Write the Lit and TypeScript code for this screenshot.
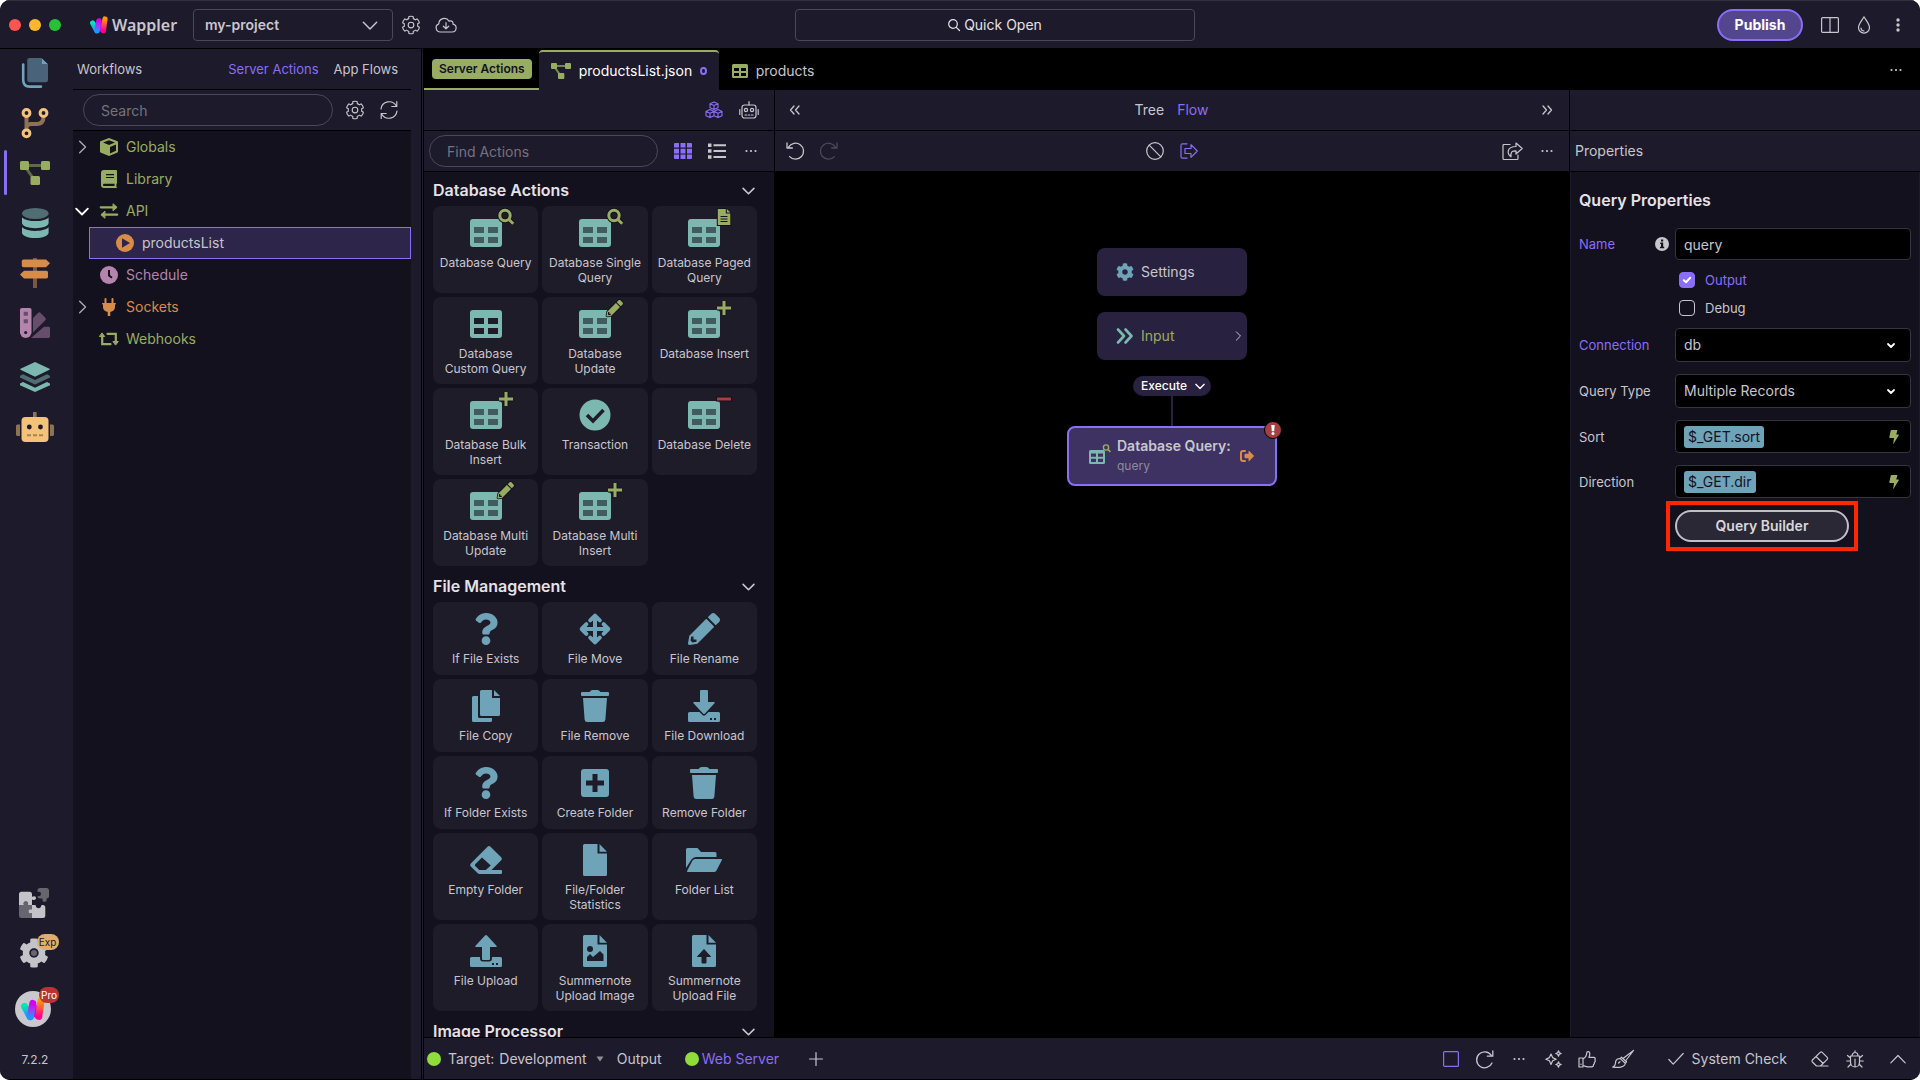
import { LitElement, html, svg, css, nothing } from "lit";
import { customElement, state } from "lit/decorators.js";

/* ---------- icon helpers ---------- */

const solid = (w: number, h: number, body: unknown, vb = `0 0 ${w} ${h}`) =>
  html`<svg class="solid" width=${w} height=${h} viewBox=${vb} aria-hidden="true">${body}</svg>`;
const line = (w: number, h: number, body: unknown, vb = `0 0 ${w} ${h}`) =>
  html`<svg class="line" width=${w} height=${h} viewBox=${vb} aria-hidden="true">${body}</svg>`;

const COG =
  "M487.4 315.7l-42.6-24.6c4.3-23.2 4.3-47 0-70.2l42.6-24.6c4.9-2.8 7.1-8.6 5.5-14-11.1-35.6-30-67.8-54.7-94.6-3.8-4.1-10-5.1-14.8-2.3L380.8 110c-17.9-15.4-38.5-27.3-60.8-35.1V25.8c0-5.6-3.9-10.5-9.4-11.7-36.7-8.2-74.3-7.8-109.2 0-5.5 1.2-9.4 6.1-9.4 11.7V75c-22.2 7.9-42.8 19.8-60.8 35.1L88.7 85.5c-4.9-2.8-11-1.9-14.8 2.3-24.7 26.7-43.6 58.9-54.7 94.6-1.7 5.4.6 11.2 5.5 14L67.3 221c-4.3 23.2-4.3 47 0 70.2l-42.6 24.6c-4.9 2.8-7.1 8.6-5.5 14 11.1 35.6 30 67.8 54.7 94.6 3.8 4.1 10 5.1 14.8 2.3l42.6-24.6c17.9 15.4 38.5 27.3 60.8 35.1v49.2c0 5.6 3.9 10.5 9.4 11.7 36.7 8.2 74.3 7.8 109.2 0 5.5-1.2 9.4-6.1 9.4-11.7v-49.2c22.2-7.9 42.8-19.8 60.8-35.1l42.6 24.6c4.9 2.8 11 1.9 14.8-2.3 24.7-26.7 43.6-58.9 54.7-94.6 1.5-5.5-.7-11.3-5.6-14.1zM256 336c-44.1 0-80-35.9-80-80s35.9-80 80-80 80 35.9 80 80-35.9 80-80 80z";
const QUESTION =
  "M202.021 0C122.202 0 70.503 32.703 29.914 91.026c-7.363 10.58-5.093 25.086 5.178 32.874l43.138 32.709c10.373 7.865 25.132 6.026 33.253-4.148 25.049-31.381 43.63-49.449 82.757-49.449 30.764 0 68.816 19.799 68.816 49.631 0 22.552-18.617 34.134-48.993 51.164-35.423 19.86-82.299 44.576-82.299 106.405V320c0 13.255 10.745 24 24 24h72.471c13.255 0 24-10.745 24-24v-5.773c0-42.86 125.268-44.645 125.268-160.627C377.504 66.256 286.902 0 202.021 0zM192 373.459c-38.196 0-69.271 31.075-69.271 69.271 0 38.195 31.075 69.27 69.271 69.27s69.271-31.075 69.271-69.271-31.075-69.27-69.271-69.27z";
const PENCIL =
  "M497.9 142.1l-46.1 46.1c-4.7 4.7-12.3 4.7-17 0l-111-111c-4.7-4.7-4.7-12.3 0-17l46.1-46.1c18.7-18.7 49.1-18.7 67.9 0l60.1 60.1c18.8 18.7 18.8 49.1 0 67.9zM284.2 99.8L21.6 362.4.4 483.9c-2.9 16.4 11.4 30.6 27.8 27.8l121.5-21.3 262.6-262.6c4.7-4.7 4.7-12.3 0-17l-111-111c-4.8-4.7-12.4-4.7-17.1 0zM88 424h48v36.3l-64.5 11.3-31.1-31.1L51.7 376H88v48z";

const cogOutline = (s = 18) =>
  line(s, s, svg`<path d=${COG} stroke-width="32"/>`, "0 0 512 512");
const chevDown = (w = 12, sw = 1.6) =>
  line(w, w, svg`<path d="M1 4l5 5 5-5" stroke-width=${sw}/>`, "0 0 12 12");
const chevRight = (w = 12) =>
  line(w, w, svg`<path d="M4 1l5 5-5 5" stroke-width="1.2"/>`, "0 0 12 12");
const dots = () =>
  solid(12, 12, svg`<circle cx="1.5" cy="6" r="1.1"/><circle cx="6" cy="6" r="1.1"/><circle cx="10.5" cy="6" r="1.1"/>`);
const refreshOne = () =>
  line(18, 18, svg`<path d="M15.2 5.2A8 8 0 1 0 16 13M16.8 1v5.2h-5.4" stroke-width="1.3"/>`);
const undo = () =>
  line(18, 18, svg`<path d="M2.6 5.2A8 8 0 1 1 3.6 14.6M1 1v5h5.4" stroke-width="1.3"/>`);
const redo = () =>
  line(18, 18, svg`<path d="M15.4 5.2A8 8 0 1 0 14.4 14.6M17 1v5h-5.4" stroke-width="1.3"/>`);
const robotLine = () =>
  line(20, 18, svg`<rect x="3" y="4" width="14" height="13" rx="2.5"/><path d="M10 .5V4M.8 8.5v5M19.2 8.5v5M6 14h1.6M9.2 14h1.6M12.4 14H14"/><circle cx="7" cy="9" r="1.6"/><circle cx="13" cy="9" r="1.6"/>`);
const cubes = () =>
  line(18, 18, svg`<path d="M9 1l4 1.8v4L9 8.6 5 6.8v-4zM5 2.8l4 1.8 4-1.8M9 4.6v4M5 8.6l4 1.8v4.3l-4 1.9-4-1.9v-4.3zM1 10.4l4 1.9 4-1.9M5 12.3v4.3M13 8.6l4 1.8v4.3l-4 1.9-4-1.9v-4.3zM9 10.4l4 1.9 4-1.9M13 12.3v4.3" stroke-width="1.1"/>`);
const eraserLine = () =>
  line(18, 16, svg`<path d="M5.5 15L1.4 11q-.9-1 0-2l7.8-7.6q1-.9 2 0l5 5q.9 1 0 2L9.5 15zM5 5.5l7.2 7M5.5 15H17"/>`);
const workflowGlyph = (w: number, h: number, dim: string) =>
  solid(w, h, svg`<path d="M8 4.5H22M6 7L13 17" fill="none" stroke=${dim} stroke-width="3"/><rect width="9" height="9" rx="1.5"/><rect x="21" width="9" height="9" rx="1.5"/><rect x="10.5" y="15" width="9.5" height="9" rx="1.5"/>`, "0 0 30 24");
const tableGlyph = (w: number, h: number, hole: string) =>
  solid(w, h, svg`<rect width="16" height="14" rx="1.5"/><path d="M2 4h5v3H2zM9 4h5v3H9zM2 9h5v3H2zM9 9h5v3H9z" fill=${hole}/>`, "0 0 16 14");

const logo = (w: number, h: number, id: string) => html`
  <svg width=${w} height=${h} viewBox="0 0 24 24" aria-hidden="true">
    <defs>
      <linearGradient id="${id}a" x1="0" y1="0" x2="0" y2="1"><stop offset="0" stop-color="#00e6b4"/><stop offset="1" stop-color="#2a8cff"/></linearGradient>
      <linearGradient id="${id}b" x1="0" y1="0" x2="0" y2="1"><stop offset="0" stop-color="#d800f0"/><stop offset=".5" stop-color="#a03cf5"/><stop offset="1" stop-color="#1e96ff"/></linearGradient>
      <linearGradient id="${id}c" x1="0" y1="0" x2="0" y2="1"><stop offset="0" stop-color="#ff9a00"/><stop offset="1" stop-color="#ff0090"/></linearGradient>
    </defs>
    <path d="M3.6 9.3L9 19.6" stroke="url(#${id}a)" stroke-width="7" stroke-linecap="round"/>
    <path d="M12 7L15.5 18" stroke="#d800f0" stroke-width="6" stroke-linecap="round"/>
    <path d="M11.8 6.4L9.4 19.6" stroke="url(#${id}b)" stroke-width="7" stroke-linecap="round"/>
    <path d="M20 4L17.8 19.4" stroke="url(#${id}c)" stroke-width="7" stroke-linecap="round"/>
  </svg>`;

/* ---------- rail icons ---------- */

const railIcons: Record<string, unknown> = {
  files: solid(30, 30, svg`<path d="M3.2 6.5V22q0 6.6 6.5 6.6H21" fill="none" stroke="#6fa3b8" stroke-width="2.6" stroke-linecap="round"/><path d="M9.5 0H22v6h6v16q0 2.3-2.3 2.3H9.5Q7.2 24.3 7.2 22V2.3Q7.2 0 9.5 0z" fill="#48637a"/><path d="M22 .5L27.8 6H22z" fill="#6fa3b8"/>`),
  git: solid(30, 30, svg`<path d="M6.5 9v12M23.5 9c0 5-3 7-7 7h-5c-3 0-5 1.5-5 4" fill="none" stroke="#8d7256" stroke-width="4"/><g fill="none" stroke="#f5c27a" stroke-width="3"><circle cx="6.5" cy="5" r="3.4"/><circle cx="23.5" cy="5" r="3.4"/><circle cx="6.5" cy="25.3" r="3.4"/></g>`),
  workflows: html`<span class="green">${workflowGlyph(30, 24, "#5f6a47")}</span>`,
  database: solid(30, 30, svg`<ellipse cx="15.3" cy="5.5" rx="13.3" ry="5.5" fill="#4f6d73"/><g fill="#7cb8b0"><path d="M2 9.5c3 2.6 8 3.6 13.3 3.6s10.5-1 13.3-3.6V15c0 3-6 5.2-13.3 5.2S2 18 2 15z"/><path d="M2 19.3c3 2.6 8 3.6 13.3 3.6s10.5-1 13.3-3.6v5.4c0 3-6 5.3-13.3 5.3S2 27.7 2 24.7z"/></g>`),
  routes: solid(30, 30, svg`<path d="M13 0h4v30h-4z" fill="#7a5540"/><g fill="#d88c4a"><path d="M3.5 1.5H26l4 3.8-4 3.9H3.5Q1.800 9.2 1.8 7.5V3.2q0-1.7 1.7-1.7z"/><path d="M26.5 12.8H4l-4 3.8 4 3.9h22.5q1.5 0 1.5-1.7v-4.3q0-1.7-1.5-1.7z"/></g>`),
  swatches: solid(30, 30, svg`<path d="M13 10l5-5q1.3-1.3 2.6 0l4.700 4.7q1.3 1.3 0 2.6L13 24.6z" fill="#674d6c"/><path d="M24 18.8h4.6q1.4 0 1.4 1.4v8.400q0 1.4-1.4 1.4H11z" fill="#674d6c"/><path d="M1.8 0h7.9q1.8 0 1.8 1.8v22.5a5.7 5.7 0 0 1-11.5 0V1.8Q0 0 1.8 0z" fill="#b584ad"/><path d="M3.7 3.7h4.2v4H3.7zM3.7 11.2h4.2v4H3.7z" fill="#674d6c"/><circle cx="5.7" cy="24.5" r="1.6" fill="#1d1a2c"/>`),
  layers: solid(30, 30, svg`<path d="M0 13.8l3-1.5 12 5.6 12-5.6 3 1.5v1.6l-15 7-15-7z" fill="#4f6d73"/><path d="M15 0l14.5 6.8q.8.5 0 1L15 14.8.5 7.8q-.8-.5 0-1zM0 21.600l3-1.5 12 5.6 12-5.6 3 1.5v1.6L15 30 0 23.2z" fill="#7cb8b0"/>`),
  robot: solid(38, 30, svg`<path d="M17 0h3.600v6H17zM0 14q0-1.5 1.5-1.5H4v11.5H1.5Q0 24 0 22.5zM34 12.5h2.5q1.5 0 1.5 1.5v8.5q0 1.5-1.5 1.5H34z" fill="#8d7256"/><rect x="5.5" y="5" width="27" height="25" rx="4" fill="#f5c27a"/><circle cx="13.3" cy="15" r="2.4" fill="#1d1a2c"/><circle cx="24.5" cy="15" r="2.4" fill="#1d1a2c"/><path d="M11 23.3h4M17 23.3h4M23 23.3h4" stroke="#a58253" stroke-width="2"/>`),
  puzzle: solid(30, 30, svg`<path d="M2.5 3.7h8q2.5 0 2.5 2.5v2.6c3-1.5 4 0 4 1.3s-1 2.8-4 1.4V17H8.500c1-3-.4-3.600-1.700-3.600S4 14 5 17H0V6.200q0-2.5 2.5-2.5z" fill="#c4c3c8"/><path d="M0 17h5c-1-3 .5-3.600 1.800-3.600s2.700.6 1.700 3.600H13v4.500c-3-1-3.500.4-3.500 1.700s.5 2.8 3.5 1.800v5H2.500Q0 30 0 27.500zM21 0h6.500Q30 0 30 2.500V8q0 2.500-2.500 2.500c.5 3-.8 3.300-2 3.300s-2.500-.5-2-3.300H21q-2.500 0-2.500-2.500c2.500.5 3.500-.5 3.500-2s-1-2.500-3.500-2V2.500Q18.500 0 21 0z" fill="#67656f"/><path d="M13 17h3.500c.5 2.6 1.500 3.200 3 3.200s2.500-.6 3-3.200h1.300q2.500 0 2.500 2.500v8q0 2.500-2.500 2.500H13v-5c-3 1-3.500-.5-3.500-1.800s.5-2.700 3.500-1.700z" fill="#c4c3c8"/>`),
  cog: solid(30, 30, svg`<path d=${COG} fill="#c4c3c8"/><circle cx="256" cy="256" r="52" fill="#67656f"/>`, "0 0 512 512"),
};

/* ---------- tile icons (32 x 32 box) ---------- */

const dbTable = (badge: unknown = nothing, hole = "#425b60") =>
  svg`<g fill="#7cb8b0"><rect y="2" width="32" height="28" rx="3"/></g><path d="M4 10h10v6H4zM18 10h10v6H18zM4 20h10v6H4zM18 20h10v6H18z" fill=${hole}/>${badge}`;
const badgeSearch = svg`<g fill="none"><circle cx="35" cy="-1.5" r="5.2" stroke="#14111e" stroke-width="5"/><path d="M39 2.5l4 4" stroke="#14111e" stroke-width="5"/><circle cx="35" cy="-1.5" r="5.2" stroke="#99ad62" stroke-width="3"/><path d="M38.7 2.2l4.5 4.5" stroke="#99ad62" stroke-width="3"/></g>`;
const badgePencil = svg`<g transform="translate(27.5 -8) scale(.0322)"><path d=${PENCIL} fill="#99ad62" stroke="#14111e" stroke-width="50" paint-order="stroke"/></g>`;
const badgePlus = svg`<path d="M36-7V7M29 0h14" stroke="#14111e" stroke-width="5"/><path d="M36-7V7M29 0h14" stroke="#99ad62" stroke-width="3"/>`;
const badgeMinus = svg`<path d="M28 0h16" stroke="#14111e" stroke-width="5"/><path d="M29 0h14" stroke="#a63f42" stroke-width="3"/>`;
const badgeDoc = svg`<path d="M29.8-8h8v4.5h4.5V8H29.8z" fill="#99ad62" stroke="#14111e" stroke-width="2" paint-order="stroke"/><path d="M38.8-8l3.5 3.5h-3.5z" fill="#99ad62"/><path d="M32.5-.5h7M32.5 2h7M32.5 4.5h7" stroke="#14111e" stroke-width="1"/>`;
const filePath = "M5.5 0H18.5V9.5H28V30.5Q28 32 26.5 32H5.5Q4 32 4 30.5V1.5Q4 0 5.5 0z";
const foldPath = "M20.5 0L28 7.7H20.5z";

const tileIcons: Record<string, unknown> = {
  dbSearch: dbTable(badgeSearch),
  dbDoc: dbTable(badgeDoc),
  dbPlain: dbTable(nothing, "#1f1c2a"),
  dbPencil: dbTable(badgePencil),
  dbPlus: dbTable(badgePlus),
  dbMinus: dbTable(badgeMinus),
  check: svg`<circle cx="16" cy="16" r="15.5" fill="#7cb8b0"/><path d="M8 16l6 6L24.5 11" fill="none" stroke="#1f1c2a" stroke-width="3.6"/>`,
  question: svg`<path transform="translate(4 0) scale(.0625)" d=${QUESTION}/>`,
  move: svg`<path d="M16 4v24M4 16h24" stroke="currentColor" stroke-width="4"/><path d="M11.2 7.4L16 2.7l4.8 4.7M11.2 24.6l4.8 4.7 4.8-4.7M7.4 11.2L2.7 16l4.7 4.8M24.6 11.2l4.7 4.8-4.7 4.8" fill="currentColor" stroke="currentColor" stroke-width="4" stroke-linecap="round" stroke-linejoin="round"/>`,
  pencil: svg`<path transform="scale(.0625)" d=${PENCIL}/>`,
  copy: svg`<path d="M3.5 6H8v20.5q0 1.5 1.5 1.5H22v2.5q0 1.5-1.5 1.5h-17Q2 32 2 30.5v-23Q2 6 3.5 6z"/><path d="M11.5 0H22v8h8v16.5q0 1.5-1.5 1.5h-17q-1.5 0-1.5-1.5v-23Q10 0 11.5 0z"/><path d="M24 0l6 6h-6z"/>`,
  trash: svg`<path d="M3 2h7.5q1.5-2 3-2h5q1.5 0 3 2H29q1 0 1 1v2q0 1-1 1H3Q2 6 2 5V3q0-1 1-1zM4 8h24l-1.6 21.5Q26.2 32 23.7 32H8.3q-2.5 0-2.7-2.5z"/>`,
  download: svg`<path d="M12 1q0-1 1-1h6q1 0 1 1v11h6q1.4 0 .5 1.2L17 23.5q-1 1-2 0L5.5 13.2Q4.6 12 6 12h6z"/><path d="M1.5 22h10l3 3q1.5 1.4 3 0l3-3h10q1.5 0 1.5 1.5v7q0 1.5-1.5 1.5h-29Q0 32 0 30.5v-7Q0 22 1.5 22z"/><path d="M22 28h2v2h-2zM26 28h2v2h-2z" fill="#1f1c2a"/>`,
  upload: svg`<path d="M12 24q0 1 1 1h6q1 0 1-1V12h6q1.4 0 .5-1.2L17 .5q-1-1-2 0L5.5 10.8Q4.6 12 6 12h6z"/><path d="M1.5 22H10v1.5q0 3 3 3h6q3 0 3-3V22h8.5q1.500 0 1.5 1.5v7q0 1.5-1.5 1.5h-29Q0 32 0 30.5v-7Q0 22 1.5 22z"/><path d="M22 28h2v2h-2zM26 28h2v2h-2z" fill="#1f1c2a"/>`,
  plusBox: svg`<rect x="2" y="2" width="28" height="28" rx="3"/><path d="M16 7v18M7 16h18" stroke="#1f1c2a" stroke-width="5"/>`,
  eraser: svg`<path d="M17.5 2.8q1.5-1.4 3 0l10.7 10.4q1.5 1.5 0 3L21.5 26H31q1 0 1 1v2q0 1-1 1H9.5q-1 0-2-1L.8 22.5q-1.5-1.5 0-3zM12 13.5L5.2 20.3q-.8.8 0 1.6L9.3 26h6.500l5-4.5z"/>`,
  file: svg`<path d=${filePath}/><path d=${foldPath}/>`,
  folder: svg`<path d="M-.5 4H9.5L13 8H27q1.5 0 1.5 1.5V13H8q-3 0-4.5 2.5L-2 24V5.5Q-2 4-.5 4z"/><path d="M7 15H33.2q1.3 0 .6 1.3l-5.3 10.2Q27.5 28 26 28H-.2q-1.3 0-.6-1.3L4.5 16.5Q5.5 15 7 15z"/>`,
  image: svg`<path d=${filePath}/><path d=${foldPath}/><circle cx="11" cy="14" r="3" fill="#1f1c2a"/><path d="M8 26v-4l3-3 3 3 7-6 3.500 3.500V26z" fill="#1f1c2a"/>`,
  fileUp: svg`<path d=${filePath}/><path d=${foldPath}/><path d="M16 14.5l6.5 7H18V28h-4v-6.500H9.500z" fill="#1f1c2a" stroke="#1f1c2a" stroke-linejoin="round"/>`,
};

interface Tile { label: string; icon: string; }
interface Section { title: string; tiles: Tile[]; }
const t = (label: string, icon: string): Tile => ({ label, icon });

const sections: Section[] = [
  {
    title: "Database Actions",
    tiles: [
      t("Database Query", "dbSearch"), t("Database Single Query", "dbSearch"), t("Database Paged Query", "dbDoc"),
      t("Database Custom Query", "dbPlain"), t("Database Update", "dbPencil"), t("Database Insert", "dbPlus"),
      t("Database Bulk Insert", "dbPlus"), t("Transaction", "check"), t("Database Delete", "dbMinus"),
      t("Database Multi Update", "dbPencil"), t("Database Multi Insert", "dbPlus"),
    ],
  },
  {
    title: "File Management",
    tiles: [
      t("If File Exists", "question"), t("File Move", "move"), t("File Rename", "pencil"),
      t("File Copy", "copy"), t("File Remove", "trash"), t("File Download", "download"),
      t("If Folder Exists", "question"), t("Create Folder", "plusBox"), t("Remove Folder", "trash"),
      t("Empty Folder", "eraser"), t("File/Folder Statistics", "file"), t("Folder List", "folder"),
      t("File Upload", "upload"), t("Summernote Upload Image", "image"), t("Summernote Upload File", "fileUp"),
    ],
  },
  { title: "Image Processor", tiles: [] },
];

/* ---------- workflow tree ---------- */

const treeIcons: Record<string, unknown> = {
  cube: solid(18, 18, svg`<path d="M9 0l8.5 3.3q.5.3.5.8v9.5q0 .6-.5.9L9 18 .5 14.5Q0 14.2 0 13.6V4.1q0-.5.5-.8z"/><path d="M9 2.2l6 2.3-6 2.5-6-2.5zM10 9l6-2.5v6.3l-6 2.7z" fill="#14111e"/>`),
  book: solid(16, 18, svg`<path d="M3 0h12q1 0 1 1v12q0 .6-.6 1v3q.6 0 .6.5t-.6.5H3q-3 0-3-3V3q0-3 3-3z"/><path d="M3 13.7h10.5v2.3H3q-1 0-1-1.1t1-1.2z" fill="#14111e"/><path d="M5 4.7h8M5 7.5h8" stroke="#14111e" stroke-width="1.2"/>`),
  arrows: line(18, 16, svg`<path d="M.8 4.3H15M3 11.7h14.2" stroke-width="2.2"/><path d="M13.3 1l3.8 3.3-3.8 3.3zM4.7 8.4L.9 11.7 4.7 15z" fill="currentColor" stroke-width="1"/>`),
  play: solid(18, 18, svg`<circle cx="9" cy="9" r="9"/><path d="M6 4.2L14 9l-8 4.8z" fill="#2d254a"/>`),
  clock: solid(18, 18, svg`<circle cx="9" cy="9" r="9"/><path d="M9 4v5.5l3 2.2" fill="none" stroke="#14111e" stroke-width="2"/>`),
  plug: solid(14, 18, svg`<path d="M2.5 1q0-1 1-1t1 1v4h-2zM9.5 1q0-1 1-1t1 1v4h-2zM.7 5h12.6q.7 0 .7.7t-.7.8H13v2.5q0 4-4.7 5V18H5.700v-4Q1 13 1 9V6.5H.7Q0 6.5 0 5.7T.7 5z"/>`),
  retweet: line(20, 14, svg`<path d="M8.5 1.8H16.8V10M11.5 12.2H3.2V4" stroke-width="2.2" stroke-linejoin="miter"/><path d="M14.3 9.5h5l-2.5 3.3zM.7 4.5h5L3.2 1.2z" fill="currentColor" stroke-width="1"/>`),
};

interface Node { label: string; icon: string; tone: string; open?: boolean; selected?: boolean; }
const tree: Node[] = [
  { label: "Globals", icon: "cube", tone: "green", open: false },
  { label: "Library", icon: "book", tone: "green" },
  { label: "API", icon: "arrows", tone: "green", open: true },
  { label: "productsList", icon: "play", tone: "orange", selected: true },
  { label: "Schedule", icon: "clock", tone: "pink" },
  { label: "Sockets", icon: "plug", tone: "orange", open: false },
  { label: "Webhooks", icon: "retweet", tone: "green" },
];

const rail = ["files", "git", "workflows", "database", "routes", "swatches", "layers", "robot"];

@customElement("app-root")
export class AppRoot extends LitElement {
  @state() private active = "workflows";

  static styles = css`
    :host {
      display: block;
      --bar: #1d1a2c;
      --body: #14111e;
      --tile: #1f1c2a;
      --text: #c8c6cd;
      --bright: #e4e2e8;
      --accent: #8a6ef5;
      --green: #99ad62;
      --rim: #4a4757;
      font: 14px/20px Inter, "Liberation Sans", sans-serif;
      color: var(--text);
    }
    * { box-sizing: border-box; }
    svg { display: block; flex: none; overflow: visible; }
    .solid { fill: currentColor; }
    .line { fill: none; stroke: currentColor; stroke-width: 1.2; stroke-linecap: round; stroke-linejoin: round; }
    button, input, select { font: inherit; color: inherit; margin: 0; padding: 0; border: 0; background: none; outline: none; }
    button { display: flex; align-items: center; justify-content: center; }
    a { color: inherit; text-decoration: none; }
    h2 { margin: 0; font-size: 16px; font-weight: 600; line-height: 20px; color: var(--bright); }
    .green { color: var(--green); }
    .orange { color: #d88c4a; }
    .pink { color: #b584ad; }
    .blue { color: #6fa3b8; }
    .plain { color: var(--text); }
    .accent { color: var(--accent); }
    .grow { flex: 1; text-align: left; }

    .app { display: flex; flex-direction: column; height: 100vh; background: #000; border-radius: 10px; overflow: hidden; }

    /* title bar */
    .top { display: grid; grid-template-columns: 795fr 400px 725fr; align-items: center; height: 49px; background: var(--bar); border-top: 1px solid #34313f; border-bottom: 1px solid #000; }
    .top-left, .top-right { display: flex; align-items: center; }
    .lights { display: flex; gap: 8px; padding-left: 9px; margin-right: 29px; }
    .light { width: 12px; height: 12px; border-radius: 50%; }
    .red { background: #ff5550; }
    .amber { background: #fdb72b; }
    .lime { background: #27c138; }
    .brand { display: flex; align-items: center; gap: 4px; width: 103px; font: 600 16px/20px "Noto Sans", sans-serif; }
    .pick { display: grid; align-items: center; }
    .pick > * { grid-area: 1 / 1; }
    .pick > svg { justify-self: end; pointer-events: none; }
    .pick select { width: 100%; appearance: none; }
    .project { width: 200px; margin-right: 8px; }
    .project select { height: 32px; padding: 0 11px; border: 1px solid var(--rim); border-radius: 4px; font-weight: 600; }
    .project > svg { margin-right: 15px; }
    .top-left > button { width: 20px; margin-right: 15px; }
    .quick { gap: 4px; height: 32px; border: 1px solid var(--rim); border-radius: 4px; color: var(--bright); }
    .top-right { justify-content: flex-end; padding-right: 20px; }
    .publish { width: 86px; height: 32px; border: 2px solid var(--accent); border-radius: 16px; background: #54468e; color: #fff; font-weight: 700; margin-right: 18px; }
    .top-right .drop { margin: 0 25px 0 18px; }

    .body { flex: 1; display: flex; min-height: 0; border-bottom: 1px solid #000; }

    /* activity rail */
    .rail { width: 73px; display: flex; flex-direction: column; align-items: stretch; background: var(--bar); padding-right: 3px; }
    .rail-btn { position: relative; height: 50px; padding-bottom: 2px; }
    .rail-btn.gap { margin-top: 4px; }
    .rail-btn.on::before { content: ""; position: absolute; left: 4px; top: 1px; width: 3px; height: 45px; border-radius: 2px; background: var(--accent); }
    .rail-end { margin-top: auto; display: flex; flex-direction: column; align-items: center; }
    .rail-end .rail-btn { padding-right: 3px; }
    .stamp { position: absolute; left: 18px; top: 5px; width: 22px; height: 16px; border-radius: 8px; background: #dfae6c; color: #1a1626; font-size: 10px; line-height: 16px; text-align: center; }
    .stamp.pro { left: 24px; top: -4px; width: 20px; background: #b83434; color: #fff; }
    .avatar { position: relative; width: 36px; height: 36px; margin: 12px 4px 25px 0; border-radius: 50%; background: #c9c8cd; }
    .version { font-size: 12px; line-height: 16px; padding-bottom: 11px; }

    /* workflows panel */
    .side { width: 351px; display: flex; flex-direction: column; padding-right: 10px; background: var(--bar); border-right: 3px double #000; }
    .side-head { display: flex; align-items: center; gap: 15px; height: 41px; padding: 0 13px 0 4px; border-bottom: 1px solid #000; font-size: 13px; }
    .side-find { display: flex; align-items: center; height: 41px; padding: 0 13px 0 10px; border-bottom: 1px solid #000; }
    .find { width: 250px; height: 32px; padding: 0 17px; border: 1px solid var(--rim); border-radius: 16px; }
    .find::placeholder { color: #75737d; opacity: 1; }
    .side-find button { margin-left: 13px; width: 18px; }
    .side-find button + button { margin-left: 16px; }
    .tree { flex: 1; margin: 0; padding: 0; list-style: none; background: var(--body); }
    .node { display: grid; grid-template-columns: 20px 32px 1fr; align-items: center; height: 32px; }
    .node svg { justify-self: center; }
    .node .twist { justify-self: start; padding-left: 2px; color: #aaa8b0; }
    .node.open .twist { color: #fff; }
    .node.sel { grid-template-columns: 19px 32px 1fr; margin-left: 16px; border: 1px solid var(--accent); background: #2d254a; }
    .node.sel .name { color: var(--text); }
    .node .name { padding-left: 1px; }

    /* main region */
    .main { flex: 1; min-width: 0; display: flex; flex-direction: column; }
    .tabs { display: flex; height: 41px; }
    .tab-group { display: flex; align-items: center; padding: 0 7px 0 8px; border-bottom: 2px solid var(--green); }
    .pill { padding: 0 7px; border-radius: 4px; background: var(--green); color: #14111e; font-size: 12px; font-weight: 600; line-height: 20px; }
    .tab { gap: 8px; padding: 2px 13px 0; }
    .tab.on { width: 180px; margin-top: 1px; padding: 0 12px; background: var(--bar); border-top: 2px solid var(--green); border-radius: 4px 4px 0 0; color: #fff; }
    .ring { width: 8px; height: 8px; border: 2px solid var(--accent); border-radius: 50%; }
    .tabs .more { margin-left: auto; padding-right: 18px; }

    .work { flex: 1; min-height: 0; display: flex; }
    .bar { display: flex; align-items: center; height: 41px; background: var(--bar); border-bottom: 1px solid #000; flex: none; }

    .actions { width: 351px; display: flex; flex-direction: column; border-right: 1px solid #000; background: var(--body); }
    .actions .bar { padding: 0 15px 0 5px; }
    .actions .find { width: 229px; margin-right: 16px; }
    .actions .bar button + button { margin-left: 16px; }
    .actions .bar .more { width: 18px; }
    .scroll { flex: 1; min-height: 0; overflow: hidden; padding: 2px 17px 0 9px; display: flex; flex-direction: column; gap: 4px; }
    .section { flex: none; }
    .section-head { display: flex; align-items: center; justify-content: space-between; height: 32px; padding-right: 2px; }
    .tiles { display: grid; grid-template-columns: repeat(3, 1fr); gap: 4px; }
    .tile { flex-direction: column; justify-content: flex-start; gap: 6px; min-height: 73px; padding: 11px 4px 8px; border-radius: 8px; background: var(--tile); font-size: 12px; line-height: 15px; }
    .tile svg { color: #6fa3b8; }

    /* flow canvas */
    .center { flex: 1; min-width: 0; display: flex; flex-direction: column; background: #000; }
    .center .bar { display: grid; grid-template-columns: 1fr auto 1fr; padding: 0 12px 0 11px; }
    .center .bar > div { display: flex; align-items: center; }
    .center .left { gap: 16px; }
    .center .mid { gap: 16px; }
    .center .views { gap: 13px; }
    .center .right { justify-content: flex-end; gap: 18px; padding-right: 4px; }
    .faint { color: #4c4959; }
    .flow { display: flex; flex-direction: column; align-items: center; gap: 16px; padding-top: 76px; }
    .card { justify-content: flex-start; width: 150px; height: 48px; gap: 7px; padding: 0 4px 0 19px; border-radius: 8px; background: #282240; }
    .chain { display: flex; flex-direction: column; align-items: center; }
    .exec { gap: 8px; height: 20px; padding: 0 6px 0 8px; border-radius: 10px; background: #282240; color: #fff; font-size: 12px; font-weight: 500; }
    .wire { width: 2px; height: 30px; background: #282240; }
    .query { position: relative; justify-content: flex-start; width: 210px; height: 60px; padding: 0 21px 0 20px; border: 2px solid var(--accent); border-radius: 8px; background: #3d3262; text-align: left; }
    .query .txt { flex: 1; padding-left: 10px; display: flex; flex-direction: column; }
    .query strong { font-size: 14px; font-weight: 600; line-height: 20px; white-space: nowrap; }
    .query .sub { font-size: 12px; line-height: 20px; color: #8f8a9c; }
    .err { position: absolute; right: -7px; top: -7px; width: 18px; height: 18px; border-radius: 50%; border: 1px solid #000; background: #a63f42; display: grid; place-items: center; color: #fff; }

    /* properties */
    .props { width: 351px; display: flex; flex-direction: column; border-left: 1px solid #000; background: var(--body); }
    .props .bar { padding-left: 5px; }
    .form { flex: 1; display: flex; flex-direction: column; gap: 12px; padding: 18px 8px 0; border: solid var(--bar); border-width: 0 1px; }
    .form h2 { margin-bottom: 6px; }
    .row { display: grid; grid-template-columns: 96px 1fr; align-items: center; }
    .lab { display: flex; align-items: center; justify-content: space-between; padding-right: 6px; font-size: 13px; }
    .lab svg { color: var(--text); }
    .field { width: 100%; height: 32px; padding: 0 8px; border: 1px solid #35333d; border-radius: 4px; background: #000; }
    .pick .field { height: 34px; }
    .row .pick > svg { margin-right: 15px; color: #fff; }
    .chipbox { display: flex; align-items: center; justify-content: space-between; height: 33px; padding-right: 11px; }
    .chip { field-sizing: content; height: 22px; padding: 0 4px; border-radius: 3px; background: #6fa3b8; color: #14111e; }
    .check { display: flex; align-items: center; gap: 10px; height: 16px; margin-left: 100px; font-size: 13px; }
    .box { display: grid; place-items: center; width: 16px; height: 16px; }
    .box > * { grid-area: 1 / 1; }
    .box input { width: 16px; height: 16px; appearance: none; border: 1px solid #c8c6cd; border-radius: 4px; }
    .box input:checked { border-color: var(--accent); background: var(--accent); }
    .box svg { color: #fff; pointer-events: none; }
    .marked { width: 174px; margin-left: 96px; outline: 4px solid #ff2600; outline-offset: 5px; }
    .builder { width: 100%; height: 32px; border: 2px solid #c0bec6; border-radius: 16px; background: #2b2836; font-weight: 600; color: #d9d7de; }

    /* status bar */
    .status { display: flex; align-items: center; height: 42px; padding: 0 14px 0 3px; background: var(--bar); border-top: 1px solid #000; }
    .led { width: 14px; height: 14px; border-radius: 50%; background: #8fdc3b; margin-right: 7px; }
    .status .dev { gap: 9px; margin: 0 13px 0 5px; }
    .status .web { margin: 0 30px 0 23px; }
    .status .web .led { margin-right: 3px; }
    .tools { display: flex; align-items: center; gap: 16px; margin-right: 34px; }
    .tools button { min-width: 18px; }
    .status .sys { gap: 8px; margin-right: 24px; }
    .ends { display: flex; align-items: center; gap: 17px; }
    .ends button:last-child { margin-left: 9px; }
  `;

  private renderRail() {
    return html`
      <nav class="rail" aria-label="Tools">
        ${rail.map(
          (n) => html`<button class="rail-btn ${n === this.active ? "on" : ""} ${n === "layers" ? "gap" : ""}"
            aria-label=${n} @click=${() => (this.active = n)}>${railIcons[n]}</button>`
        )}
        <div class="rail-end">
          <button class="rail-btn" aria-label="Extensions">${railIcons.puzzle}</button>
          <button class="rail-btn" aria-label="Options">${railIcons.cog}<span class="stamp">Exp</span></button>
          <button class="avatar" aria-label="Account">${logo(24, 24, "av")}<span class="stamp pro">Pro</span></button>
          <span class="version">7.2.2</span>
        </div>
      </nav>`;
  }

  private renderSide() {
    return html`
      <aside class="side">
        <div class="side-head">
          <span class="grow">Workflows</span>
          <a href="#server" class="accent">Server Actions</a>
          <a href="#flows">App Flows</a>
        </div>
        <div class="side-find">
          <input class="find" type="search" placeholder="Search" aria-label="Search workflows" />
          <button aria-label="Workflow settings">${cogOutline(18)}</button>
          <button aria-label="Refresh">${line(18, 18, svg`<path d="M1 8a8.2 8.2 0 0 1 15.3-3M17 10a8.2 8.2 0 0 1-15.3 3M16.8.5v5h-5M1.2 17.5v-5h5"/>`)}</button>
        </div>
        <ul class="tree">
          ${tree.map(
            (n) => html`<li class="node ${n.tone} ${n.selected ? "sel" : ""} ${n.open ? "open" : ""}">
              <span class="twist">${n.open === undefined ? nothing : n.open ? chevDown(14, 1.6) : chevRight(14)}</span>
              ${treeIcons[n.icon]}<span class="name">${n.label}</span>
            </li>`
          )}
        </ul>
      </aside>`;
  }

  private renderActions() {
    return html`
      <section class="actions" aria-label="Actions">
        <div class="bar">
          <span class="grow"></span>
          <button class="accent" aria-label="Components">${cubes()}</button>
          <button aria-label="Assistant">${robotLine()}</button>
        </div>
        <div class="bar">
          <input class="find" type="search" placeholder="Find Actions" aria-label="Find Actions" />
          <button class="accent" aria-label="Grid view">${solid(18, 16, svg`<path d="M0 1q0-1 1-1h4v4.6H0zM6.5 0h5v4.6h-5zM13 0h4q1 0 1 1v3.6h-5zM0 5.8h5v4.6H0zM6.5 5.8h5v4.6h-5zM13 5.8h5v4.6h-5zM0 11.6h5V16H1q-1 0-1-1zM6.5 11.6h5V16h-5zM13 11.6h5V15q0 1-1 1h-4z"/>`)}</button>
          <button aria-label="List view">${solid(18, 16, svg`<path d="M0 .5h3.5V4H0zM0 6.3h3.5v3.5H0zM0 12.2h3.5v3.5H0zM5.5 1.2H18v2H5.5zM5.5 7H18v2H5.5zM5.5 12.9H18v2H5.5z"/>`)}</button>
          <button class="more" aria-label="More">${dots()}</button>
        </div>
        <div class="scroll">
          ${sections.map(
            (s) => html`<div class="section">
              <div class="section-head"><h2>${s.title}</h2>${chevDown(13, 1.5)}</div>
              <div class="tiles">
                ${s.tiles.map((x) => html`<button class="tile">${solid(32, 32, tileIcons[x.icon])}<span>${x.label}</span></button>`)}
              </div>
            </div>`
          )}
        </div>
      </section>`;
  }

  private renderCenter() {
    return html`
      <section class="center" aria-label="Flow">
        <div class="bar">
          <div class="left"><button aria-label="Collapse">${line(18, 12, svg`<path d="M8 2L4.5 6 8 10M13 2L9.5 6l3.5 4" stroke-width="1.3"/>`)}</button></div>
          <div class="views"><a href="#tree">Tree</a><a href="#flow" class="accent">Flow</a></div>
          <div class="right"><button aria-label="Expand">${line(12, 12, svg`<path d="M2 2l3.5 4L2 10M7 2l3.5 4L7 10" stroke-width="1.3"/>`)}</button></div>
        </div>
        <div class="bar">
          <div class="left">
            <button aria-label="Undo">${undo()}</button>
            <button class="faint" aria-label="Redo">${redo()}</button>
          </div>
          <div class="mid">
            <button aria-label="Disable">${line(18, 18, svg`<circle cx="9" cy="9" r="8.3"/><path d="M3.2 3.2l11.6 11.6"/>`)}</button>
            <button class="accent" aria-label="Output">${line(18, 18, svg`<path d="M7 1.8H2.5q-1.5 0-1.5 1.5v11.4q0 1.5 1.5 1.5H7M5 6.5h6V2.7L17.3 9 11 15.3v-3.8H5z"/>`)}</button>
          </div>
          <div class="right">
            <button aria-label="Share">${line(21, 18, svg`<path d="M8 2.5H2Q1 2.5 1 3.5v13q0 1 1 1h13q1 0 1-1V13M14 1l6.2 5.5L14 12V8.8c-4 0-5.5.8-5 6-4.5-3.5-4.2-10 5-10.3z"/>`)}</button>
            <button aria-label="More">${dots()}</button>
          </div>
        </div>
        <div class="flow">
          <button class="card"><span class="blue">${solid(18, 18, svg`<path d=${COG}/>`, "0 0 512 512")}</span>Settings</button>
          <button class="card green">${line(18, 18, svg`<path d="M2 2.5L8 9l-6 6.5M9.5 2.5L15.5 9l-6 6.5" stroke="#7cb8b0" stroke-width="2.6"/>`)}<span class="grow">Input</span><span class="plain">${chevRight(10)}</span></button>
          <div class="chain">
            <button class="exec">Execute ${chevDown(10, 1.6)}</button>
            <span class="wire"></span>
            <button class="query">
              ${solid(18, 16, svg`<rect y="2" width="16" height="14" rx="1.5" fill="#7cb8b0"/><path d="M2 5.5h5v3.2H2zM9 5.5h5v3.2H9zM2 10.7h5v3.2H2zM9 10.7h5v3.2H9z" fill="#3d3262"/><circle cx="17" cy="-.5" r="2.6" fill="none" stroke="#99ad62" stroke-width="1.4"/><path d="M19 1.5l2.4 2.4" stroke="#99ad62" stroke-width="1.6"/>`)}
              <span class="txt"><strong>Database Query:</strong><span class="sub">query</span></span>
              <span class="orange">${solid(14, 12, svg`<path d="M5 1H3Q1 1 1 3v6q0 2 2 2h2" fill="none" stroke="currentColor" stroke-width="2" stroke-linecap="round"/><path d="M4.5 4.5q0-.7.7-.7H8.5V1.3q0-1 .8-.4l4.4 4.5q.6.6 0 1.2L9.3 11.1q-.8.6-.8-.4V8.2H5.2q-.7 0-.7-.7z"/>`)}</span>
              <span class="err">${solid(4, 10, svg`<path d="M.3 0h3.4l-.5 6.3H.8z"/><circle cx="2" cy="8.5" r="1.5"/>`)}</span>
            </button>
          </div>
        </div>
      </section>`;
  }

  private renderProps() {
    const bolt = html`<span class="green">${solid(10, 14, svg`<path d="M2.5 0H8q.6 0 .4.6L7.2 4.5H9.4q.8 0 .4.7L4.7 13.6q-.6.7-.5-.2L5 8H1Q.2 8 .3 7.2L1.7.7Q1.8 0 2.5 0z"/>`)}</span>`;
    const caret = line(10, 10, svg`<path d="M2 4l3 3 3-3" stroke-width="1.8"/>`);
    return html`
      <aside class="props">
        <div class="bar"></div>
        <div class="bar">Properties</div>
        <form class="form" @submit=${(e: Event) => e.preventDefault()}>
          <h2>Query Properties</h2>
          <div class="row">
            <label class="lab accent" for="name">Name ${solid(14, 14, svg`<circle cx="7" cy="7" r="7"/><path d="M6 2.6h2.2v2H6zM5.2 5.6h3v4.2h1v1.4H5V9.8h1V7h-.8z" fill="#14111e"/>`)}</label>
            <input class="field" id="name" type="text" .value=${"query"} />
          </div>
          <label class="check accent"><span class="box"><input type="checkbox" checked />${line(8, 8, svg`<path d="M.8 4.2l2.2 2L7.2 1.8" stroke-width="2"/>`)}</span>Output</label>
          <label class="check"><span class="box"><input type="checkbox" /></span>Debug</label>
          <div class="row">
            <label class="lab accent" for="conn">Connection</label>
            <div class="pick"><select class="field" id="conn"><option>db</option></select>${caret}</div>
          </div>
          <div class="row">
            <label class="lab" for="qtype">Query Type</label>
            <div class="pick"><select class="field" id="qtype"><option>Multiple Records</option></select>${caret}</div>
          </div>
          <div class="row">
            <label class="lab" for="sort">Sort</label>
            <div class="field chipbox"><input class="chip" id="sort" type="text" value="$_GET.sort" />${bolt}</div>
          </div>
          <div class="row">
            <label class="lab" for="dir">Direction</label>
            <div class="field chipbox"><input class="chip" id="dir" type="text" value="$_GET.dir" />${bolt}</div>
          </div>
          <div class="marked"><button class="builder" type="button">Query Builder</button></div>
        </form>
      </aside>`;
  }

  render() {
    return html`
      <div class="app">
        <header class="top">
          <div class="top-left">
            <div class="lights"><span class="light red"></span><span class="light amber"></span><span class="light lime"></span></div>
            <div class="brand">${logo(18, 18, "tb")}Wappler</div>
            <div class="pick project">
              <select aria-label="Project"><option>my-project</option></select>${chevDown(16, 1.1)}
            </div>
            <button aria-label="Project settings">${cogOutline(18)}</button>
            <button aria-label="Deploy">${line(22, 16, svg`<path d="M5.5 15H17a4 4 0 0 0 1-7.9q.3-3.3-2.7-3.3-.6 0-1.3.3A5.5 5.5 0 0 0 3.8 6.9 4.2 4.2 0 0 0 5.5 15zM11 5.5v6M8.3 9.2L11 11.8l2.7-2.6"/>`)}</button>
          </div>
          <button class="quick">${line(12, 12, svg`<circle cx="5" cy="5" r="4.3"/><path d="M8.3 8.3l3.2 3.2"/>`)}Quick Open</button>
          <div class="top-right">
            <button class="publish">Publish</button>
            <button aria-label="Layout">${line(18, 16, svg`<rect x=".6" y=".6" width="16.8" height="14.8" rx="1"/><path d="M9 1v14"/>`)}</button>
            <button class="drop" aria-label="Theme">${line(14, 18, svg`<path d="M7 .8C4.5 5 1.5 8 1.5 11.6a5.5 5.5 0 0 0 11 0C12.5 8 9.5 5 7 .8zM4 12a3.2 3.2 0 0 0 3 3"/>`)}</button>
            <button aria-label="Menu">${solid(4, 14, svg`<circle cx="2" cy="2" r="1.7"/><circle cx="2" cy="7" r="1.7"/><circle cx="2" cy="12" r="1.7"/>`)}</button>
          </div>
        </header>
        <div class="body">
          ${this.renderRail()} ${this.renderSide()}
          <main class="main">
            <div class="tabs">
              <div class="tab-group"><span class="pill">Server Actions</span></div>
              <button class="tab on"><span class="green">${workflowGlyph(20, 16, "#76864f")}</span>productsList.json<span class="ring"></span></button>
              <button class="tab"><span class="green">${tableGlyph(16, 14, "#000")}</span>products</button>
              <button class="more" aria-label="More tabs">${dots()}</button>
            </div>
            <div class="work">${this.renderActions()} ${this.renderCenter()} ${this.renderProps()}</div>
            <footer class="status">
              <span class="led"></span>Target:
              <button class="dev">Development ${solid(8, 6, svg`<path d="M.5.5h7L4 5.5z" fill="#8f8d97"/>`)}</button>
              <button>Output</button>
              <button class="web accent"><span class="led"></span>Web Server</button>
              <button aria-label="Add">${line(14, 14, svg`<path d="M7 .5v13M.5 7h13"/>`)}</button>
              <span class="grow"></span>
              <div class="tools">
                <button class="accent" aria-label="Stop">${line(16, 16, svg`<rect x=".6" y=".6" width="14.8" height="14.8" rx="1"/>`)}</button>
                <button aria-label="Restart">${refreshOne()}</button>
                <button aria-label="More">${dots()}</button>
                <button aria-label="Magic">${line(18, 18, svg`<path d="M7 4l1.6 3.6L12.2 9.2 8.6 10.8 7 14.4l-1.6-3.6L1.8 9.2l3.6-1.6zM14.5.8l.8 1.9 1.9.8-1.9.8-.8 1.9-.8-1.9-1.9-.8 1.9-.8zM14.5 11.8l.8 1.9 1.9.8-1.9.8-.8 1.9-.8-1.9-1.9-.8 1.9-.8z"/>`)}</button>
                <button aria-label="Feedback">${line(18, 18, svg`<path d="M1 8h4v9H1zM5 9c2.5-1.2 3.5-3 3.8-6.2.2-1.8 3-1.8 3 .8 0 1.5-.4 2.6-.9 3.7h4.8c1.6 0 1.9 1.5 1.2 2.5.7.8.5 2-.5 2.5.3 1.2-.1 1.9-.9 2.3.1 1.5-.6 2.2-1.9 2.2H9.5C7.5 16.800 7 16 5 15.5M3 14v.5"/>`)}</button>
                <button aria-label="Theme brush">${line(22, 18, svg`<path d="M21.5.5L11 8.5M21.5.5L13.5 11M9.5 7.2l5 4.6-1.2 1.5L8.3 8.6zM8.3 8.6C4 8 3.5 11.5 3.4 13.5c0 1.6-.9 2.7-2.6 3.6 5 .6 12 .6 12.5-3.8M6.5 13l1.5-1.3"/>`)}</button>
              </div>
              <button class="sys">${line(16, 14, svg`<path d="M.8 7.5l4.4 4.7L15.2 1.5"/>`)}System Check</button>
              <div class="ends">
                <button aria-label="Clear">${eraserLine()}</button>
                <button aria-label="Debug">${line(18, 18, svg`<path d="M4.5 6h9v6.5a4.5 4.5 0 0 1-9 0zM6 6a3 3.5 0 0 1 6 0M9 9v8M4.5 8L1.5 5.5M13.5 8l3-2.500M4.5 11H.7M13.5 11h3.8M5 14l-3 3M13 14l3 3M9 .8V2.5"/>`)}</button>
                <button aria-label="Expand panel">${line(16, 10, svg`<path d="M.8 8.8L8 1.5l7.2 7.3"/>`)}</button>
              </div>
            </footer>
          </main>
        </div>
      </div>`;
  }
}
